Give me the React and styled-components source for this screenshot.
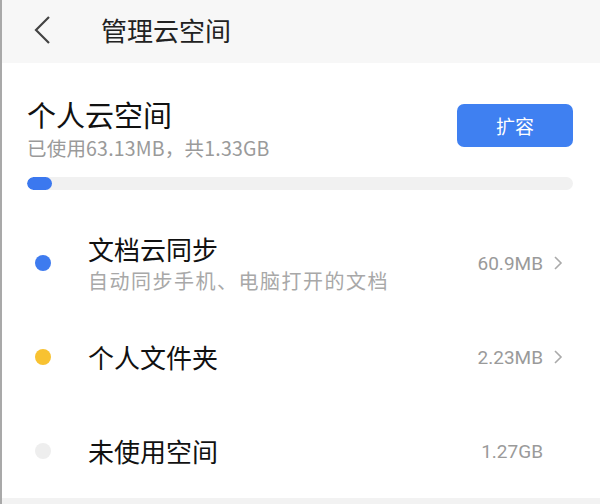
import React from 'react';
import styled, { createGlobalStyle } from 'styled-components';

const GlobalStyle = createGlobalStyle`
  html, body {
    margin: 0;
    padding: 0;
    background: #ffffff;
  }
  body {
    font-family: "Noto Sans CJK SC", "Noto Sans", sans-serif;
  }
`;

const Page = styled.div`
  width: 600px;
  height: 504px;
  box-sizing: border-box;
  border-left: 2px solid #a9a9a9;
  display: flex;
  flex-direction: column;
  overflow: hidden;
  background: #fff;
`;

const Header = styled.div`
  height: 63px;
  flex-shrink: 0;
  display: flex;
  align-items: center;
  padding-left: 31px;
  background: #f7f7f7;
`;

const Back = styled.svg`
  width: 18px;
  height: 30px;
  margin-top: -4px;
`;

const HeaderTitle = styled.div`
  margin-left: 50px;
  margin-top: -4px;
  font-size: 26px;
  line-height: 32px;
  color: #222;
`;

const Summary = styled.div`
  padding: 33px 27px 0 25px;
  display: flex;
  flex-direction: column;
`;

const SummaryTop = styled.div`
  display: flex;
  justify-content: space-between;
  align-items: flex-start;
`;

const SpaceTitle = styled.div`
  font-size: 29px;
  line-height: 36px;
  color: #111;
`;

const SpaceSub = styled.div`
  margin-top: 4px;
  font-size: 19.5px;
  letter-spacing: 0.2px;
  line-height: 24px;
  color: #9a9a9a;
`;

const Expand = styled.button`
  margin-top: 8px;
  width: 116px;
  height: 43px;
  border: none;
  border-radius: 7px;
  background: #3f80f1;
  color: #fff;
  font-family: inherit;
  font-size: 19px;
  cursor: pointer;
`;

const Track = styled.div`
  margin-top: 17px;
  height: 13px;
  border-radius: 7px;
  background: #f1f1f1;
  overflow: hidden;
`;

const Fill = styled.div`
  height: 100%;
  border-radius: 7px;
  background: #3b78ef;
`;

const List = styled.div`
  margin-top: 26px;
  display: flex;
  flex-direction: column;
`;

const Row = styled.div`
  height: 94px;
  display: flex;
  align-items: center;
  padding: 0 37px 0 33px;
`;

const Dot = styled.span`
  width: 16px;
  height: 16px;
  border-radius: 50%;
  flex-shrink: 0;
  background: ${p => p.color};
`;

const Texts = styled.div`
  flex: 1;
  margin-left: 37px;
  display: flex;
  flex-direction: column;
`;

const RowTitle = styled.div`
  font-size: 26px;
  line-height: 34px;
  color: #111;
`;

const RowSub = styled.div`
  margin-top: 2px;
  font-size: 20px;
  letter-spacing: 1.5px;
  line-height: 26px;
  color: #a8a8a8;
`;

const Value = styled.span`
  font-family: "Roboto", "Noto Sans", sans-serif;
  font-size: 19px;
  color: #9a9a9a;
`;

const Chevron = styled.svg`
  width: 10px;
  height: 16px;
  margin-left: 10px;
  visibility: ${p => (p.hidden ? 'hidden' : 'visible')};
`;

const Bottom = styled.div`
  flex: 1;
  background: #f2f2f2;
`;

const rows = [
  { color: '#3e7bef', title: '文档云同步', sub: '自动同步手机、电脑打开的文档', value: '60.9MB', link: true },
  { color: '#f8c231', title: '个人文件夹', value: '2.23MB', link: true },
  { color: '#eeeeee', title: '未使用空间', value: '1.27GB', link: false },
];

export default function App() {
  const used = 63.13;
  const total = 1.33 * 1024;
  return (
    <>
      <GlobalStyle />
      <Page>
        <Header>
          <Back viewBox="0 0 18 30">
            <path d="M16 2 L3 15 L16 28" fill="none" stroke="#444" strokeWidth="2.2" />
          </Back>
          <HeaderTitle>管理云空间</HeaderTitle>
        </Header>
        <Summary>
          <SummaryTop>
            <div>
              <SpaceTitle>个人云空间</SpaceTitle>
              <SpaceSub>已使用63.13MB，共1.33GB</SpaceSub>
            </div>
            <Expand>扩容</Expand>
          </SummaryTop>
          <Track>
            <Fill style={{ width: `${Math.max(4, (used / total) * 100)}%` }} />
          </Track>
        </Summary>
        <List>
          {rows.map(r => (
            <Row key={r.title}>
              <Dot color={r.color} />
              <Texts>
                <RowTitle>{r.title}</RowTitle>
                {r.sub && <RowSub>{r.sub}</RowSub>}
              </Texts>
              <Value>{r.value}</Value>
              <Chevron viewBox="0 0 10 16" hidden={!r.link}>
                <path d="M2 2 L8 8 L2 14" fill="none" stroke="#aaa" strokeWidth="1.6" />
              </Chevron>
            </Row>
          ))}
        </List>
        <Bottom />
      </Page>
    </>
  );
}
